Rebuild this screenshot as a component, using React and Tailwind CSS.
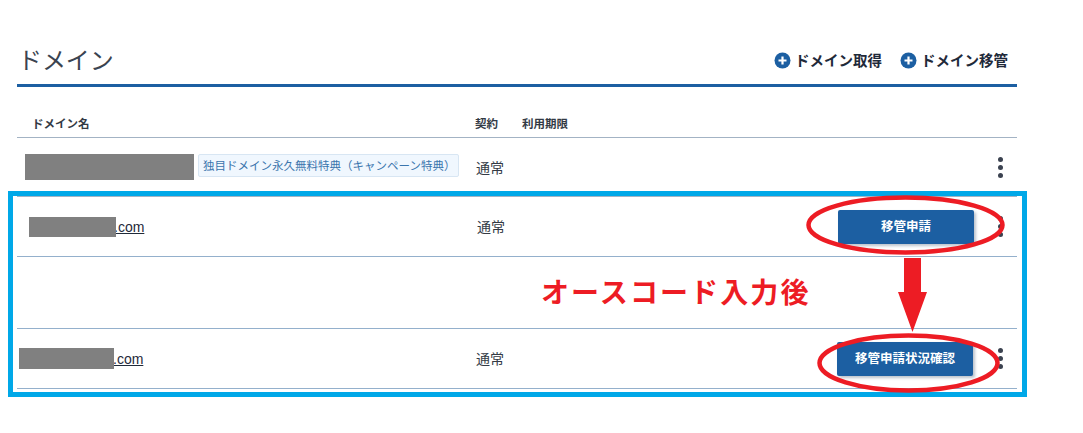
const font = { fontFamily: '"Noto Sans CJK JP", "Liberation Sans", sans-serif' };

function PlusIcon() {
  return (
    <svg width="17" height="17" viewBox="0 0 17 17">
      <circle cx="8.5" cy="8.5" r="8" fill="#1c5fa2" />
      <path d="M8.5 4.5v8M4.5 8.5h8" stroke="#fff" strokeWidth="2.2" />
    </svg>
  );
}

function Dots() {
  return (
    <div className="flex flex-col gap-[3px]">
      <span className="w-[5px] h-[5px] rounded-full bg-[#3b4250]" />
      <span className="w-[5px] h-[5px] rounded-full bg-[#3b4250]" />
      <span className="w-[5px] h-[5px] rounded-full bg-[#3b4250]" />
    </div>
  );
}

function Domain({ pad, mask, shift }) {
  return (
    <div className={`flex items-center ${pad}`}>
      <div className={`relative z-10 bg-[#808080] ${mask}`} />
      <a className={`${shift} text-[14px] leading-[20px] underline text-[#1f2a3a] [font-family:'Liberation_Sans',sans-serif]`}>.com</a>
    </div>
  );
}

function Action({ label, className }) {
  return (
    <button className={`h-[34px] w-[136px] rounded-[2px] bg-[#1c5fa2] text-white text-[12.5px] font-bold shadow-[2px_2px_3px_rgba(60,80,110,0.35)] ${className}`}>
      {label}
    </button>
  );
}

function Overlay() {
  return (
    <>
      <div className="absolute z-20 left-[8px] top-[191px] w-[1019px] h-[206px] border-[5px] border-[#00a8e8] pointer-events-none" />
      <svg className="absolute z-20 left-0 top-0 pointer-events-none" width="1083" height="433">
        <ellipse cx="905.5" cy="225" rx="97" ry="27.5" fill="none" stroke="#ed1c24" strokeWidth="4.5" />
        <ellipse cx="908.5" cy="363" rx="89" ry="27.5" fill="none" stroke="#ed1c24" strokeWidth="4.5" />
        <path d="M904 258h17v34h6l-14.5 40-14.5-40h6z" fill="#ed1c24" />
      </svg>
      <div className="absolute z-20 left-[541px] top-[272px] text-[28px] leading-[38px] font-bold tracking-[2.1px] text-[#ed1c24] whitespace-nowrap">
        オースコード入力後
      </div>
    </>
  );
}

export default function App() {
  return (
    <div className="relative w-[1083px] h-[433px] bg-white overflow-hidden" style={font}>
      <div className="ml-[17px] w-[1000px]">
        <div className="h-[87px] border-b-[3px] border-[#1c5fa2] flex items-end justify-between pb-[7px]">
          <h1 className="text-[24px] leading-[36px] font-normal text-[#3a4350] tracking-[-0.1px] pl-[1px]">ドメイン</h1>
          <div className="flex items-center gap-[18px] pr-[9px] pb-[7px]">
            <div className="flex items-center gap-[4px] text-[14.5px] leading-[20px] font-bold text-[#1f2a3a]">
              <PlusIcon />
              ドメイン取得
            </div>
            <div className="flex items-center gap-[4px] text-[14.5px] leading-[20px] font-bold text-[#1f2a3a]">
              <PlusIcon />
              ドメイン移管
            </div>
          </div>
        </div>

        <div className="h-[51px] pt-[27px] pl-[15px] flex border-b border-[#a3b3c4] text-[11.5px] leading-[18px] font-bold text-[#333a45]">
          <div className="w-[443px]">ドメイン名</div>
          <div className="w-[47px]">契約</div>
          <div>利用期限</div>
        </div>

        <div className="h-[59px] flex items-center border-b border-[#a3b3c4]">
          <div className="w-[459px] flex items-start pl-[8px] gap-[4px]">
            <div className="w-[169px] h-[26px] bg-[#808080]" />
            <span className="w-[261px] h-[23px] pl-[4px] border border-[#d8e6f3] bg-[#f0f7fe] rounded-[2px] text-[11.5px] leading-[21px] text-[#3a75ad] whitespace-nowrap">
              独目ドメイン永久無料特典（キャンペーン特典）
            </span>
          </div>
          <div className="text-[14px] text-[#333a45]">通常</div>
          <div className="ml-auto mr-[14px]"><Dots /></div>
        </div>

        <div className="h-[60px] flex items-center border-b border-[#94b0cc]">
          <div className="w-[460px]"><Domain pad="pl-[12px]" mask="w-[87px] h-[20px]" shift="-ml-[2px]" /></div>
          <div className="text-[14px] text-[#333a45]">通常</div>
          <Action label="移管申請" className="ml-auto" />
          <div className="ml-[24px] mr-[14px]"><Dots /></div>
        </div>

        <div className="h-[72px] border-b border-[#94b0cc]" />

        <div className="h-[60px] flex items-center border-b border-[#94b0cc]">
          <div className="w-[459px]"><Domain pad="pl-[2px]" mask="w-[95px] h-[21px]" shift="-ml-[1px]" /></div>
          <div className="text-[14px] text-[#333a45]">通常</div>
          <Action label="移管申請状況確認" className="ml-auto" />
          <div className="ml-[25px] mr-[14px]"><Dots /></div>
        </div>
      </div>
      <Overlay />
    </div>
  );
}
